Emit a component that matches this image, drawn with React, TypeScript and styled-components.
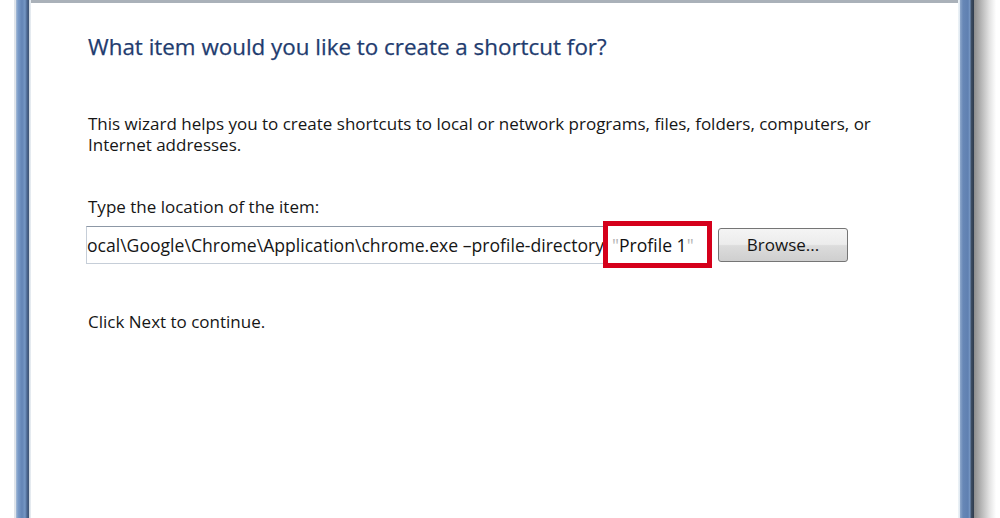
import styled, { createGlobalStyle } from "styled-components";

const GlobalStyle = createGlobalStyle`
  html, body {
    margin: 0;
    padding: 0;
    background: #ffffff;
  }
  body {
    font-family: "Open Sans", "Noto Sans", "Liberation Sans", sans-serif;
  }
`;

const App = () => {
  return (
    <>
      <GlobalStyle />
      <S.Screen>
        <S.LeftEdge />
        <S.Client>
          <S.Title>What item would you like to create a shortcut for?</S.Title>
          <S.Body>
            This wizard helps you to create shortcuts to local or network programs, files, folders, computers, or
            Internet addresses.
          </S.Body>
          <S.Label>Type the location of the item:</S.Label>
          <S.FieldRow>
            <S.Field>
              <S.FieldText>
                C:\Users\User\AppData\Local\Google\Chrome\Application\chrome.exe –profile-directory
              </S.FieldText>
            </S.Field>
            <S.Highlight>
              <S.Quote>"</S.Quote>Profile 1<S.Quote>"</S.Quote>
            </S.Highlight>
            <S.Button>Browse...</S.Button>
          </S.FieldRow>
          <S.Hint>Click Next to continue.</S.Hint>
        </S.Client>
        <S.RightEdge />
        <S.Shadow />
      </S.Screen>
    </>
  );
};

export default App;

const S = {
  Screen: styled.div`
    display: flex;
    width: 1000px;
    height: 518px;
    overflow: hidden;
    padding-left: 14px;
    box-sizing: border-box;
  `,
  LeftEdge: styled.div`
    width: 17px;
    flex-shrink: 0;
    background: linear-gradient(
      to right,
      #dfe4ea 0px,
      #dfe4ea 2px,
      #a7bcd6 2px,
      #7a9bc8 4px,
      #6384b5 8px,
      #7597c4 11px,
      #4b6690 13px,
      #3e5270 15px,
      #c8d2dd 15px,
      #eef2f6 17px
    );
  `,
  Client: styled.div`
    flex: 1;
    display: flex;
    flex-direction: column;
    padding: 30px 0 0 57px;
    border-top: 3px solid #aab1b9;
    background: #ffffff;
  `,
  Title: styled.h1`
    margin: 0;
    font-size: 22.4px;
    font-weight: 400;
    line-height: 28px;
    color: #1f3c6f;
    -webkit-text-stroke: 0.25px #1f3c6f;
  `,
  Body: styled.p`
    margin: 52px 0 0;
    font-size: 17px;
    line-height: 21px;
    color: #161616;
    max-width: 800px;
  `,
  Label: styled.div`
    margin-top: 41px;
    font-size: 17px;
    line-height: 21px;
    color: #161616;
  `,
  FieldRow: styled.div`
    display: flex;
    align-items: center;
    margin-top: 4px;
    margin-left: -2px;
  `,
  Field: styled.div`
    width: 521px;
    height: 38px;
    box-sizing: border-box;
    display: flex;
    justify-content: flex-end;
    align-items: center;
    overflow: hidden;
    border: 1px solid #c6ced8;
    border-top-color: #8d98a6;
    background: #ffffff;
    padding-right: 2px;
  `,
  FieldText: styled.span`
    white-space: nowrap;
    font-size: 17.6px;
    color: #161616;
  `,
  Highlight: styled.div`
    width: 109px;
    height: 47px;
    box-sizing: border-box;
    margin-left: -4px;
    border: 5px solid #d5001b;
    background: #ffffff;
    display: flex;
    align-items: center;
    padding-left: 4px;
    font-size: 17.6px;
    color: #111111;
    white-space: nowrap;
  `,
  Quote: styled.span`
    color: #b5b5b5;
  `,
  Button: styled.button`
    margin-left: 6px;
    width: 130px;
    height: 34px;
    border: 1px solid #757575;
    border-radius: 3px;
    background: linear-gradient(to bottom, #f4f4f4 0%, #ececec 48%, #dcdcdc 52%, #cfcfcf 100%);
    font-family: "Open Sans", "Noto Sans", "Liberation Sans", sans-serif;
    font-size: 17px;
    color: #151515;
    padding: 0;
  `,
  Hint: styled.div`
    margin-top: 43px;
    font-size: 17px;
    line-height: 21px;
    color: #161616;
  `,
  RightEdge: styled.div`
    width: 16px;
    flex-shrink: 0;
    background: linear-gradient(
      to right,
      #eef4f8 0px,
      #dde6ef 2px,
      #8fa9cc 2px,
      #6787b6 5px,
      #5f80b1 10px,
      #7a9ac6 12px,
      #3e4f66 13px,
      #2f3b4c 16px
    );
  `,
  Shadow: styled.div`
    width: 26px;
    flex-shrink: 0;
    background: linear-gradient(to right, #8c8c8c 0%, #b9b9b9 30%, #e4e4e4 60%, #ffffff 85%);
  `,
};
